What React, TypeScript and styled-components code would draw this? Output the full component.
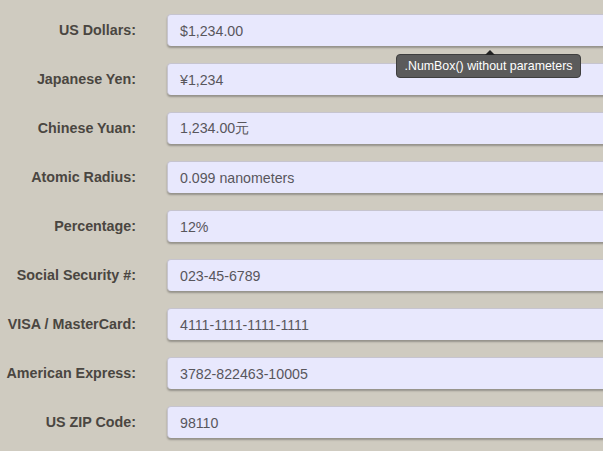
import React from "react";
import styled, { createGlobalStyle } from "styled-components";

const GlobalStyle = createGlobalStyle`
  html, body {
    margin: 0;
    padding: 0;
    background: #cfcbc0;
    overflow: hidden;
  }
  body {
    font-family: "Liberation Sans", Arial, sans-serif;
  }
`;

const fields = [
  { label: "US Dollars:", value: "$1,234.00" },
  { label: "Japanese Yen:", value: "¥1,234" },
  { label: "Chinese Yuan:", value: "1,234.00元" },
  { label: "Atomic Radius:", value: "0.099 nanometers" },
  { label: "Percentage:", value: "12%" },
  { label: "Social Security #:", value: "023-45-6789" },
  { label: "VISA / MasterCard:", value: "4111-1111-1111-1111" },
  { label: "American Express:", value: "3782-822463-10005" },
  { label: "US ZIP Code:", value: "98110" },
];

const App = () => {
  return (
    <Page>
      <GlobalStyle />
      <Form>
        {fields.map((f, i) => (
          <Row key={f.label}>
            <Label>{f.label}</Label>
            <Field>{f.value}</Field>
            {i === 1 && <Tip>.NumBox() without parameters</Tip>}
          </Row>
        ))}
      </Form>
    </Page>
  );
};

export default App;

const Page = styled.div`
  width: 603px;
  height: 451px;
  overflow: hidden;
  background: #cfcbc0;
`;

const Form = styled.div`
  display: flex;
  flex-direction: column;
  gap: 17px;
  padding-top: 14px;
`;

const Row = styled.div`
  position: relative;
  display: grid;
  grid-template-columns: 136px 460px;
  column-gap: 31px;
  align-items: center;
  height: 32px;
`;

const Label = styled.div`
  text-align: right;
  font-size: 14.3px;
  font-weight: bold;
  color: #4a4641;
  white-space: nowrap;
`;

const Field = styled.div`
  box-sizing: border-box;
  height: 32px;
  padding: 0 12px;
  display: flex;
  align-items: center;
  background: #e8e8fd;
  border: 1px solid #c6c4cf;
  border-bottom: none;
  border-radius: 4px;
  box-shadow: 0 2px 2px rgba(0, 0, 0, 0.28);
  font-size: 14.2px;
  color: #58565c;
  white-space: nowrap;
`;

const Tip = styled.div`
  position: absolute;
  left: 396px;
  top: -9px;
  box-sizing: border-box;
  width: 185px;
  height: 24px;
  display: flex;
  align-items: center;
  justify-content: center;
  background: #5b5b5b;
  border: 1px solid #3e3e3e;
  border-radius: 4px;
  color: #fff;
  font-size: 12.4px;
  white-space: nowrap;

  &::before {
    content: "";
    position: absolute;
    left: 88px;
    top: -5px;
    border-left: 5px solid transparent;
    border-right: 5px solid transparent;
    border-bottom: 5px solid #222;
  }
`;
